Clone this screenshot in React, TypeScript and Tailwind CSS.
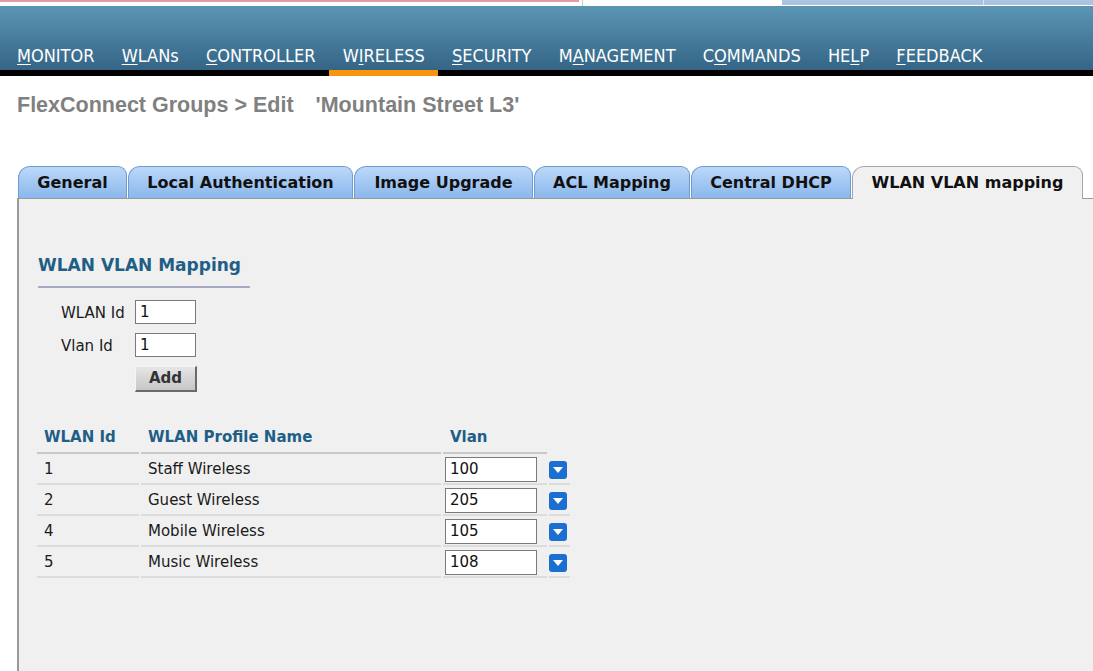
import React from "react";

const navItems: { pre: string; u: string; post: string; active?: boolean }[] = [
  { pre: "", u: "M", post: "ONITOR" },
  { pre: "", u: "W", post: "LANs" },
  { pre: "", u: "C", post: "ONTROLLER" },
  { pre: "W", u: "I", post: "RELESS", active: true },
  { pre: "", u: "S", post: "ECURITY" },
  { pre: "M", u: "A", post: "NAGEMENT" },
  { pre: "C", u: "O", post: "MMANDS" },
  { pre: "HE", u: "L", post: "P" },
  { pre: "", u: "F", post: "EEDBACK" },
];

const tabs: { label: string; w: string; active?: boolean }[] = [
  { label: "General", w: "w-[109px]" },
  { label: "Local Authentication", w: "w-[225px]" },
  { label: "Image Upgrade", w: "w-[179px]" },
  { label: "ACL Mapping", w: "w-[156px]" },
  { label: "Central DHCP", w: "w-[160px]" },
  { label: "WLAN VLAN mapping", w: "w-[231px]", active: true },
];

const rows = [
  { id: "1", name: "Staff Wireless", vlan: "100" },
  { id: "2", name: "Guest Wireless", vlan: "205" },
  { id: "4", name: "Mobile Wireless", vlan: "105" },
  { id: "5", name: "Music Wireless", vlan: "108" },
];

function DropIcon() {
  return (
    <div className="w-[18px] h-[18px] rounded-[3px] bg-[#1a6fd0] flex items-center justify-center">
      <svg width="10" height="6" viewBox="0 0 10 6">
        <polygon points="0,0 10,0 5,6" fill="#ffffff" />
      </svg>
    </div>
  );
}

export default function App() {
  const body = { fontFamily: '"DejaVu Sans", Verdana, sans-serif' };
  return (
    <div className="w-[1093px] h-[671px] bg-white overflow-hidden" style={body}>
      {/* top strip */}
      <div className="flex h-[6px] bg-white">
        <div className="w-[579px] border-t-2 border-[#e49aa3]" />
        <div className="w-[3px]" />
        <div className="w-px bg-[#c8c8c8]" />
        <div className="w-[199px]" />
        <div className="w-[201px] h-[5px] bg-[#a9c4df]" />
        <div className="w-px h-[5px] bg-[#d8e4ef]" />
        <div className="flex-1 h-[5px] bg-[#a9c4df]" />
      </div>

      {/* header */}
      <div className="h-[70px] bg-linear-to-b from-[#5c95b4] to-[#346586] border-b-[6px] border-black flex items-end pl-[3.4px]">
        {navItems.map((n) => (
          <div key={n.pre + n.u + n.post} className="relative h-full flex items-end px-[13.6px] pb-[4px]">
            <span
              className="text-white text-[18px] leading-[20px]"
              style={{ fontFamily: '"DejaVu Sans Condensed", "DejaVu Sans", sans-serif' }}
            >
              {n.pre}
              <span className="underline underline-offset-[2px]">{n.u}</span>
              {n.post}
            </span>
            {n.active && <div className="absolute left-0 right-0 -bottom-[6px] h-[6px] bg-[#f7960e]" />}
          </div>
        ))}
      </div>

      {/* title */}
      <div
        className="mt-[17px] ml-[17px] text-[21.5px] leading-[24px] font-bold text-[#808080] flex"
        style={{ fontFamily: '"Liberation Sans", Arial, sans-serif' }}
      >
        <span>FlexConnect Groups &gt; Edit</span>
        <span className="ml-[22px]">'Mountain Street L3'</span>
      </div>

      {/* tabs */}
      <div className="mt-[49px] ml-[18px] flex gap-px relative z-10">
        {tabs.map((t) =>
          t.active ? (
            <div
              key={t.label}
              className={`${t.w} h-[33px] -mb-px rounded-tl-[12px] rounded-tr-[9px] bg-[#f0f0f0] border border-b-0 border-[#a6a6a6] flex items-center justify-center text-[16px] font-bold text-[#111]`}
            >
              {t.label}
            </div>
          ) : (
            <div
              key={t.label}
              className={`${t.w} h-[32px] rounded-tl-[12px] rounded-tr-[9px] bg-linear-to-b from-[#bcd8f8] to-[#8ab7ec] border border-b-0 border-[#6e9cd2] flex items-center justify-center text-[16px] font-bold text-[#111]`}
            >
              {t.label}
            </div>
          )
        )}
      </div>

      {/* panel */}
      <div className="ml-[17px] h-[473px] bg-[#f0f0f0] border-l-2 border-t border-[#9a9a9a] pt-[56px]">
        <div className="ml-[19px] w-[212px] pb-[11px] border-b-2 border-[#a5abc2]">
          <div className="text-[17px] leading-[20px] font-bold text-[#1f5e86]">WLAN VLAN Mapping</div>
        </div>

        <div className="ml-[42px] mt-[12px] flex flex-col gap-[9px]">
          <div className="flex items-center">
            <div className="w-[74px] text-[15px] leading-[20px] pt-[1px] text-[#1a1a1a]">WLAN Id</div>
            <div className="w-[61px] h-[24px] bg-white border border-[#7a7a7a] text-[15px] leading-[22px] pl-[4px] text-[#111]">1</div>
          </div>
          <div className="flex items-center">
            <div className="w-[74px] text-[15px] leading-[20px] pt-[1px] text-[#1a1a1a]">Vlan Id</div>
            <div className="w-[61px] h-[24px] bg-white border border-[#7a7a7a] text-[15px] leading-[22px] pl-[4px] text-[#111]">1</div>
          </div>
          <div className="flex">
            <div className="ml-[74px] w-[62px] h-[26px] bg-linear-to-b from-[#e6e6e6] to-[#c6c6c6] border border-t-[#f4f4f4] border-l-[#f4f4f4] border-r-[#6a6a6a] border-b-[#6a6a6a] border-r-2 border-b-2 flex items-center justify-center text-[15px] font-bold text-[#333]">
              Add
            </div>
          </div>
        </div>

        {/* table */}
        <div className="ml-[18px] mt-[30px] grid grid-cols-[102px_300px_104px_21px] gap-x-[2px] text-[15px]">
          <div className="h-[32px] border-b-2 border-[#c8c8c8] pl-[7px] flex items-center font-bold text-[#1f5e86]">WLAN Id</div>
          <div className="h-[32px] border-b-2 border-[#c8c8c8] pl-[7px] flex items-center font-bold text-[#1f5e86]">WLAN Profile Name</div>
          <div className="h-[32px] border-b-2 border-[#c8c8c8] pl-[7px] flex items-center font-bold text-[#1f5e86]">Vlan</div>
          <div className="h-[32px]" />
          {rows.map((r) => (
            <React.Fragment key={r.id}>
              <div className="h-[31px] border-b-2 border-[#dcdcdc] pl-[7px] pt-[2px] flex items-center text-[#1a1a1a]">{r.id}</div>
              <div className="h-[31px] border-b-2 border-[#dcdcdc] pl-[7px] pt-[2px] flex items-center text-[#1a1a1a]">{r.name}</div>
              <div className="h-[31px] border-b-2 border-[#dcdcdc] pl-[2px] pt-[2px] flex items-center">
                <div className="w-[92px] h-[25px] bg-white border border-[#7a7a7a] pl-[4px] leading-[23px] text-[#111]">{r.vlan}</div>
              </div>
              <div className="h-[31px] border-b-2 border-[#dcdcdc] pt-[2px] flex items-center">
                <DropIcon />
              </div>
            </React.Fragment>
          ))}
        </div>
      </div>
    </div>
  );
}
